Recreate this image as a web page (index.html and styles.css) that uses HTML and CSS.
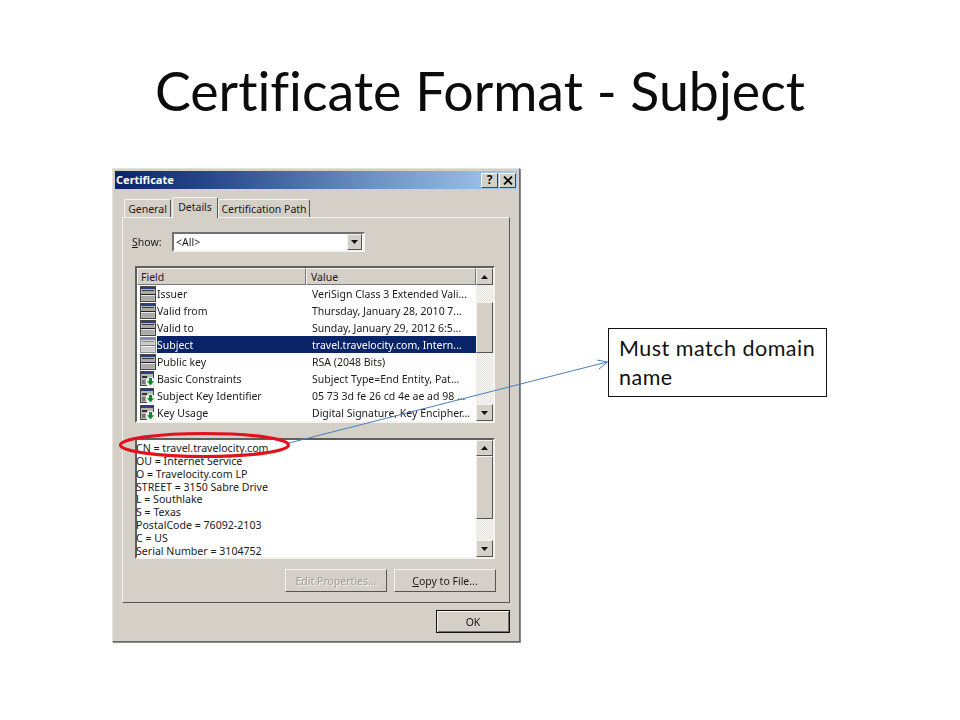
FILE: index.html
```html
<!DOCTYPE html>
<html lang="en">
<head>
<meta charset="utf-8">
<title>Certificate Format - Subject</title>
<link rel="stylesheet" href="styles.css">
</head>
<body>
<svg class="defs" width="0" height="0" aria-hidden="true">
  <symbol id="ic-std" viewBox="0 0 16 16">
    <rect x="0.5" y="0.5" width="15" height="15" fill="#b8b6b0" stroke="#444"/>
    <rect x="1" y="1" width="14" height="2" fill="#2a3f80"/>
    <rect x="2" y="4" width="12" height="10" fill="#a9a9a9"/>
    <rect x="2" y="4" width="12" height="1" fill="#3c3c3c"/>
    <rect x="1" y="8" width="14" height="1" fill="#222"/>
    <rect x="1" y="9" width="14" height="1" fill="#e8e8e8"/>
  </symbol>
  <symbol id="ic-ext" viewBox="0 0 16 16">
    <rect x="0.5" y="0.5" width="13" height="14" fill="#b8b6b0" stroke="#444"/>
    <rect x="1" y="1" width="12" height="2" fill="#2a3f80"/>
    <rect x="2" y="5" width="5" height="2" fill="#333"/>
    <rect x="2" y="9" width="4" height="4" fill="#777"/>
    <circle cx="10.5" cy="11" r="5" fill="#f2f2f2"/>
    <path d="M9 7h3v3.2h2L10.5 14.6 7 10.2h2z" fill="#0c8a28"/>
  </symbol>
  <symbol id="ar-up" viewBox="0 0 7 4"><path d="M3.5 0L7 4H0z" fill="#111"/></symbol>
  <symbol id="ar-dn" viewBox="0 0 7 4"><path d="M0 0h7L3.5 4z" fill="#111"/></symbol>
  <symbol id="ic-x" viewBox="0 0 10 9"><path d="M1 0.5L9 8.5M9 0.5L1 8.5" fill="none" stroke="#111" stroke-width="1.8"/></symbol>
</svg>

<main class="slide">
  <h1 class="title">Certificate Format - Subject</h1>

  <section class="dialog">
    <header class="titlebar">
      <span class="titlebar-text">Certificate</span>
      <span class="tb-btn tb-help">?</span>
      <span class="tb-btn tb-close"><svg class="tb-x"><use href="#ic-x"/></svg></span>
    </header>

    <nav class="tabs">
      <span class="tab tab-general">General</span>
      <span class="tab tab-active">Details</span>
      <span class="tab tab-path">Certification Path</span>
    </nav>

    <div class="panel">
      <div class="show-row">
        <span class="show-label"><u>S</u>how:</span>
        <div class="combo">
          <span class="combo-value">&lt;All&gt;</span>
          <span class="sb-btn combo-btn"><svg class="arrow"><use href="#ar-dn"/></svg></span>
        </div>
      </div>

      <div class="well list">
        <div class="list-main">
          <div class="list-head">
            <span class="head-cell head-field">Field</span>
            <span class="head-cell head-value">Value</span>
          </div>
          <div class="row"><svg class="icon"><use href="#ic-std"/></svg><span class="cell-field">Issuer</span><span class="cell-value">VeriSign Class 3 Extended Vali...</span></div>
          <div class="row"><svg class="icon"><use href="#ic-std"/></svg><span class="cell-field">Valid from</span><span class="cell-value">Thursday, January 28, 2010 7...</span></div>
          <div class="row"><svg class="icon"><use href="#ic-std"/></svg><span class="cell-field">Valid to</span><span class="cell-value">Sunday, January 29, 2012 6:5...</span></div>
          <div class="row row-selected"><svg class="icon icon-selected"><use href="#ic-std"/></svg><span class="cell-field">Subject</span><span class="cell-value">travel.travelocity.com, Intern...</span></div>
          <div class="row"><svg class="icon"><use href="#ic-std"/></svg><span class="cell-field">Public key</span><span class="cell-value">RSA (2048 Bits)</span></div>
          <div class="row"><svg class="icon"><use href="#ic-ext"/></svg><span class="cell-field">Basic Constraints</span><span class="cell-value">Subject Type=End Entity, Pat...</span></div>
          <div class="row"><svg class="icon"><use href="#ic-ext"/></svg><span class="cell-field">Subject Key Identifier</span><span class="cell-value">05 73 3d fe 26 cd 4e ae ad 98 ...</span></div>
          <div class="row"><svg class="icon"><use href="#ic-ext"/></svg><span class="cell-field">Key Usage</span><span class="cell-value">Digital Signature, Key Encipher...</span></div>
        </div>
        <div class="scrollbar">
          <span class="sb-btn"><svg class="arrow"><use href="#ar-up"/></svg></span>
          <span class="sb-track sb-t1"></span>
          <span class="sb-thumb sb-th1"></span>
          <span class="sb-track sb-fill"></span>
          <span class="sb-btn"><svg class="arrow"><use href="#ar-dn"/></svg></span>
        </div>
      </div>

      <div class="well detail">
        <div class="detail-text">
          <div>CN = travel.travelocity.com</div>
          <div>OU = Internet Service</div>
          <div>O = Travelocity.com LP</div>
          <div>STREET = 3150 Sabre Drive</div>
          <div>L = Southlake</div>
          <div>S = Texas</div>
          <div>PostalCode = 76092-2103</div>
          <div>C = US</div>
          <div>Serial Number = 3104752</div>
        </div>
        <div class="scrollbar">
          <span class="sb-btn sb-btn-short"><svg class="arrow"><use href="#ar-up"/></svg></span>
          <span class="sb-thumb sb-th2"></span>
          <span class="sb-track sb-fill"></span>
          <span class="sb-btn"><svg class="arrow"><use href="#ar-dn"/></svg></span>
        </div>
      </div>

      <div class="button-row">
        <span class="btn btn-disabled">Edit Properties...</span>
        <span class="btn"><u>C</u>opy to File...</span>
      </div>
    </div>

    <footer class="dialog-footer">
      <span class="btn btn-ok">OK</span>
    </footer>
  </section>

  <aside class="callout">Must match domain name</aside>

  <svg class="annotations" width="960" height="720" viewBox="0 0 960 720" aria-hidden="true">
    <ellipse cx="204.5" cy="445" rx="84" ry="11.5" fill="none" stroke="#e2111d" stroke-width="3.2"/>
    <path d="M289 443L607 362" fill="none" stroke="#4a7ebb" stroke-width="1"/>
    <path d="M597 360L607.5 362L599 369" fill="none" stroke="#4a7ebb" stroke-width="1"/>
  </svg>
</main>
</body>
</html>
```

FILE: styles.css
```css
* { box-sizing: border-box; }

html, body {
  margin: 0;
  padding: 0;
  background: #fff;
}

.defs { position: absolute; }

.slide {
  position: relative;
  width: 960px;
  height: 720px;
  overflow: hidden;
  background: #fff;
}

.title {
  margin: 0;
  padding-top: 55px;
  text-align: center;
  font-family: "Lato", "Open Sans", sans-serif;
  font-variant-ligatures: none;
  font-weight: 400;
  font-size: 53.7px;
  line-height: 70px;
  color: #0c0c0c;
}

/* dialog: a window placed on the slide */
.dialog {
  position: absolute;
  left: 112px;
  top: 168px;
  width: 408px;
  height: 474px;
  display: flex;
  flex-direction: column;
  padding: 2px;
  background: #d4d0c8;
  border: 1px solid;
  border-color: #e4e2dc #6a6a6a #6a6a6a #e4e2dc;
  box-shadow: 1px 1px 0 #8a8a8a;
  font-family: "Noto Sans", "DejaVu Sans", sans-serif;
  font-size: 10.5px;
  color: #1a1a1a;
  filter: blur(0.3px);
}

.titlebar {
  flex: none;
  height: 18px;
  display: flex;
  align-items: center;
  gap: 1px;
  padding: 0 1px 0 1px;
  background: linear-gradient(90deg, #0a246a 0%, #2a4a8c 25%, #6e93c4 65%, #a6caf0 100%);
}

.titlebar-text {
  flex: 1;
  padding-bottom: 2px;
  color: #fff;
  font-weight: 700;
  font-size: 11px;
}

.tb-btn {
  width: 17px;
  height: 15px;
  display: flex;
  align-items: center;
  justify-content: center;
  background: #d4d0c8;
  border: 1px solid;
  border-color: #fff #444 #444 #fff;
  color: #111;
  font-weight: 700;
  font-size: 12px;
  line-height: 1;
}

.tb-x { width: 10px; height: 9px; }

.tabs {
  flex: none;
  height: 29px;
  display: flex;
  align-items: flex-end;
  padding-left: 9px;
  margin-bottom: -1px;
  position: relative;
  z-index: 1;
}

.tab {
  height: 18px;
  display: flex;
  align-items: center;
  justify-content: center;
  background: #d4d0c8;
  border: 1px solid;
  border-color: #f4f3ef #555 transparent #f4f3ef;
  border-bottom: 0;
  border-radius: 2px 2px 0 0;
  padding-top: 1px;
}

.tab-general { width: 47px; margin-right: 1px; margin-bottom: 1px; }
.tab-active { width: 46px; height: 21px; padding-bottom: 3px; }
.tab-path { width: 92px; margin-bottom: 1px; }

.panel {
  flex: none;
  height: 386px;
  margin: 0 7px;
  padding: 14px 15px 0 12px;
  border: 1px solid;
  border-color: #f4f3ef #555 #555 #f4f3ef;
  display: flex;
  flex-direction: column;
}

.show-row {
  flex: none;
  height: 20px;
  display: flex;
  align-items: center;
}

.show-label { width: 40px; margin-left: -3px; }

.combo {
  width: 193px;
  height: 20px;
  display: flex;
  align-items: center;
  justify-content: space-between;
  background: #fff;
  padding-right: 1px;
  border: 2px solid;
  border-color: #707070 #f4f3ef #f4f3ef #707070;
}

.combo-value { padding-left: 2px; }

.sb-btn.combo-btn { height: 16px; width: 15px; }

.well {
  display: flex;
  background: #fff;
  border: 2px solid;
  border-color: #5e5e5e #f4f3ef #f4f3ef #5e5e5e;
  width: 360px;
}

.list {
  flex: none;
  height: 157px;
  margin-top: 14px;
}

.list-main {
  flex: 1;
  min-width: 0;
  overflow: hidden;
}

.list-head {
  height: 17px;
  display: flex;
  background: #d4d0c8;
}

.head-cell {
  display: flex;
  align-items: center;
  padding-left: 3px;
  border: 1px solid;
  border-color: #f4f3ef #777 #777 #f4f3ef;
}

.head-field { width: 169px; }
.head-value { flex: 1; padding-left: 4px; }

.row {
  height: 17px;
  display: flex;
  align-items: center;
  padding-left: 3px;
  white-space: nowrap;
}

.icon {
  flex: none;
  width: 16px;
  height: 16px;
  margin-right: 1px;
}

.icon-selected { opacity: 0.6; }

.cell-field { width: 155px; flex: none; }

.row-selected {
  color: #fff;
  background: linear-gradient(90deg, #fff 0, #fff 20px, #0a246a 20px);
}

.scrollbar {
  flex: none;
  width: 17px;
  display: flex;
  flex-direction: column;
  background: #e9e7e2;
}

.sb-btn {
  flex: none;
  width: 17px;
  height: 17px;
  display: flex;
  align-items: center;
  justify-content: center;
  background: #d4d0c8;
  border: 1px solid;
  border-color: #f4f3ef #555 #555 #f4f3ef;
}

.sb-btn-short { height: 16px; }

.arrow { width: 7px; height: 4px; }

.sb-track {
  background-color: #eeece8;
  background-image: repeating-conic-gradient(#e6e4de 0 25%, #f8f7f5 0 50%);
  background-size: 2px 2px;
}

.sb-t1 { height: 17px; flex: none; }
.sb-fill { flex: 1; }

.sb-thumb {
  flex: none;
  background: #d4d0c8;
  border: 1px solid;
  border-color: #f4f3ef #555 #555 #f4f3ef;
}

.sb-th1 { height: 51px; }
.sb-th2 { height: 63px; }

.detail {
  flex: none;
  height: 121px;
  margin-top: 15px;
}

.detail-text {
  flex: 1;
  padding-top: 2px;
  margin-left: -1px;
  font-size: 10.6px;
  line-height: 12.85px;
  white-space: nowrap;
}

.button-row {
  flex: none;
  display: flex;
  justify-content: flex-end;
  gap: 7px;
  margin-top: 10px;
  width: 361px;
}

.btn {
  width: 102px;
  height: 23px;
  display: flex;
  align-items: center;
  justify-content: center;
  white-space: pre;
  background: #d4d0c8;
  border: 1px solid;
  border-color: #f4f3ef #555 #555 #f4f3ef;
}

.btn-disabled {
  color: #a09d96;
  text-shadow: 1px 1px 0 #f4f3ef;
}

.dialog-footer {
  flex: 1;
  display: flex;
  justify-content: flex-end;
  padding: 7px 7px 0 0;
}

.btn.btn-ok {
  width: 74px;
  height: 23px;
  border-color: #111;
  box-shadow: inset 1px 1px 0 #f4f3ef, inset -1px -1px 0 #707070;
}

/* annotations over the slide */
.callout {
  position: absolute;
  left: 608px;
  top: 328px;
  width: 219px;
  height: 69px;
  padding: 5px 10px;
  background: #fff;
  border: 1px solid #111;
  font-family: "Lato", "Open Sans", sans-serif;
  font-variant-ligatures: none;
  font-size: 21.5px;
  letter-spacing: 0.5px;
  line-height: 29px;
  color: #111;
}

.annotations {
  position: absolute;
  left: 0;
  top: 0;
  pointer-events: none;
}
```
